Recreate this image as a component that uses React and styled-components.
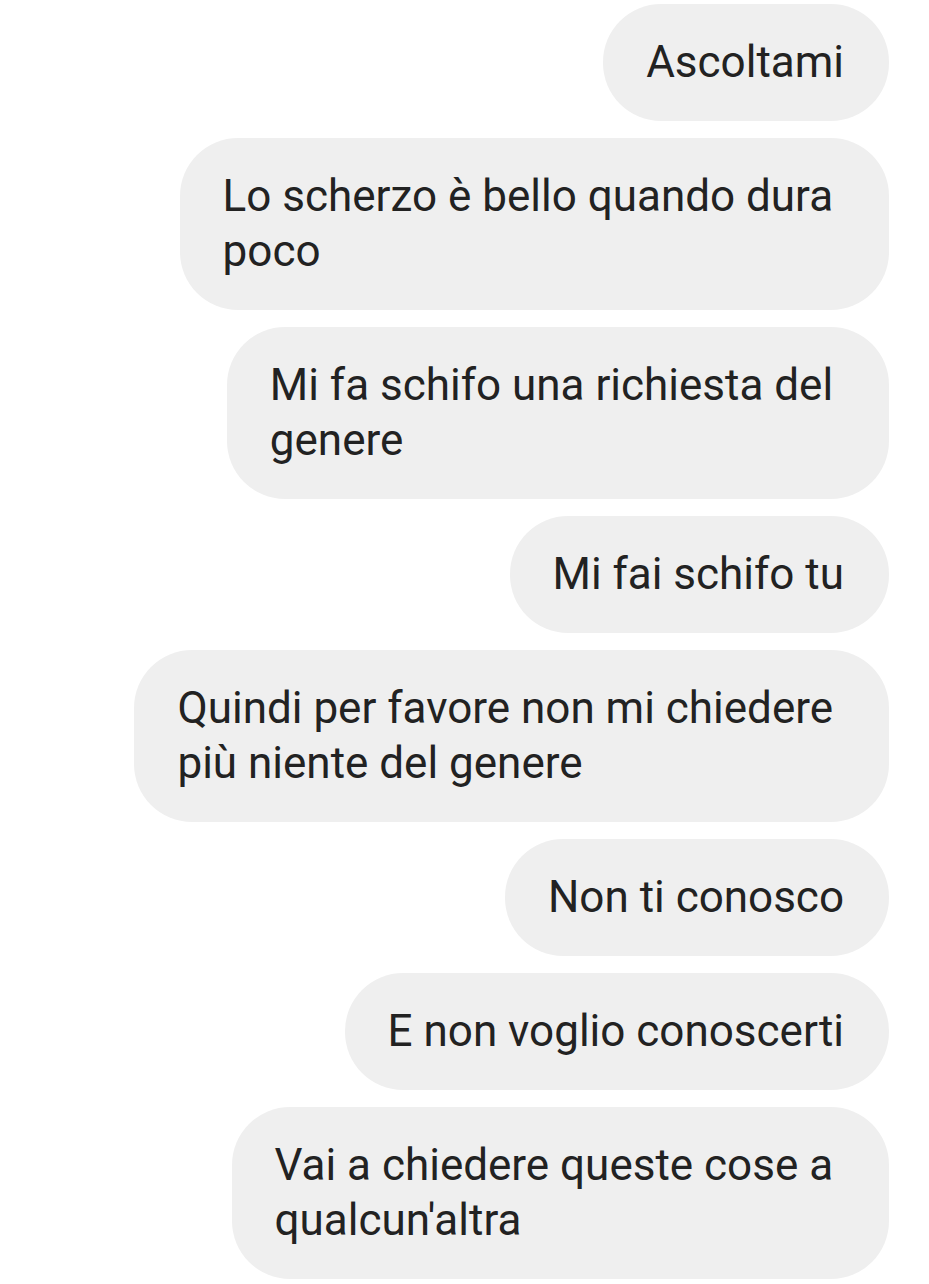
import styled, { createGlobalStyle } from "styled-components";

const GlobalStyle = createGlobalStyle`
  html, body {
    margin: 0;
    padding: 0;
    background: #ffffff;
  }
  body {
    font-family: Roboto, "Noto Sans", "Liberation Sans", sans-serif;
  }
`;

// wrapped lines keep their trailing space, like the app's text layout does
const messages = [
  ["Ascoltami"],
  ["Lo scherzo è bello quando dura ", "poco"],
  ["Mi fa schifo una richiesta del ", "genere"],
  ["Mi fai schifo tu"],
  ["Quindi per favore non mi chiedere ", "più niente del genere"],
  ["Non ti conosco"],
  ["E non voglio conoscerti"],
  ["Vai a chiedere queste cose a ", "qualcun'altra"],
];

export default function App() {
  return (
    <>
      <GlobalStyle />
      <Thread>
        {messages.map((lines, i) => (
          <Bubble key={i}>
            {lines.map((line, j) => (
              <Line key={j}>{line}</Line>
            ))}
          </Bubble>
        ))}
      </Thread>
    </>
  );
}

const Thread = styled.div`
  display: flex;
  flex-direction: column;
  align-items: flex-end;
  gap: 17px;
  padding: 4px 40px 0 0;
  box-sizing: border-box;
  width: 100%;
`;

const Bubble = styled.div`
  display: flex;
  flex-direction: column;
  align-items: flex-start;
  background: #efefef;
  color: #222222;
  border-radius: 58px;
  padding: 31px 45px 31px 43px;
  font-size: 44px;
  line-height: 55px;
`;

const Line = styled.span`
  white-space: pre;
`;
